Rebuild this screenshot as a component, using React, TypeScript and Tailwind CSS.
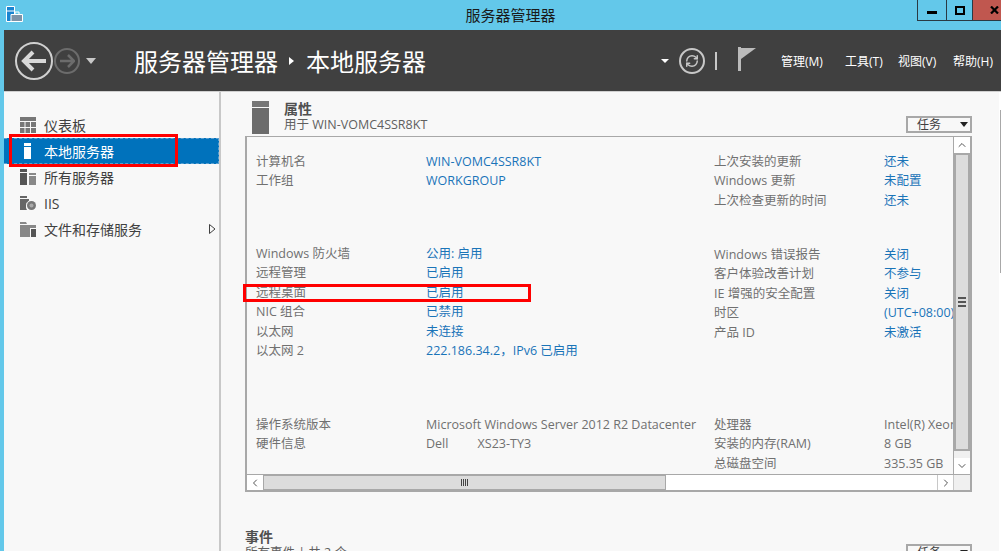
import { ChevronUp, ChevronDown, ChevronLeft, ChevronRight, RefreshCw } from "lucide-react";

function KV({ k, v, plain }: { k: string; v: string; plain?: boolean }) {
  return (
    <div className="flex h-[19.5px] items-center whitespace-pre">
      <span className="w-[170px] shrink-0 text-[#707070]">{k}</span>
      <span className={plain ? "text-[#707070]" : "text-[#1a74b8]"}>{v}</span>
    </div>
  );
}

function NavIcon({ kind, active }: { kind: string; active?: boolean }) {
  if (kind === "grid")
    return (
      <svg width="16" height="16" viewBox="0 0 16 16">
        <path d="M0 0h16v4H0zM0 5h4.500v5H0zM5.500 5h4.500v5H5.500zM11 5h5v5h-5zM0 11h4.500v5H0zM5.500 11h4.500v5H5.500zM11 11h5v5h-5z" fill="#777" />
      </svg>
    );
  if (kind === "local")
    return (
      <svg width="16" height="16" viewBox="0 0 16 16">
        <path d="M4 0h7v3H4zM4 4h7v12H4z" fill={active ? "#fff" : "#666"} />
      </svg>
    );
  if (kind === "all")
    return (
      <svg width="16" height="16" viewBox="0 0 16 16">
        <path d="M0 0h7v3H0zM0 4h7v12H0z" fill="#555" />
        <path d="M9 4h7v2H9zM9 7h7v9H9z" fill="#888" />
      </svg>
    );
  if (kind === "iis")
    return (
      <svg width="16" height="16" viewBox="0 0 16 16">
        <path d="M0 1h7v2H0zM0 4h9v1.500A6 6 0 0 0 6 10.500 6 6 0 0 0 7 15H0z" fill="#666" />
        <circle cx="11.500" cy="10.500" r="4.500" fill="#777" />
        <circle cx="11.500" cy="10.500" r="2" fill="#aaa" />
      </svg>
    );
  return (
    <svg width="16" height="16" viewBox="0 0 16 16">
      <path d="M0 1h6l1 2H0zM0 4h16v3H10v9H0z" fill="#888" />
      <path d="M11 8h5v8h-5z" fill="#555" />
    </svg>
  );
}

function TaskButton({ className }: { className: string }) {
  return (
    <div className={`flex h-[17px] w-[66px] items-center justify-between border-2 border-[#a8a8a8] pl-[9px] pr-[2px] text-[12px] text-[#404040] ${className}`}>
      <span>任务</span>
      <div className="h-0 w-0 border-x-[4px] border-t-[5px] border-x-transparent border-t-[#222]" />
    </div>
  );
}

const navItems = [
  { kind: "grid", label: "仪表板" },
  { kind: "local", label: "本地服务器", active: true },
  { kind: "all", label: "所有服务器" },
  { kind: "iis", label: "IIS" },
  { kind: "file", label: "文件和存储服务", more: true },
];

const col1a = [["计算机名", "WIN-VOMC4SSR8KT"], ["工作组", "WORKGROUP"]];
const col1b = [
  ["Windows 防火墙", "公用: 启用"],
  ["远程管理", "已启用"],
  ["远程桌面", "已启用"],
  ["NIC 组合", "已禁用"],
  ["以太网", "未连接"],
  ["以太网 2", "222.186.34.2，IPv6 已启用"],
];
const col1c = [["操作系统版本", "Microsoft Windows Server 2012 R2 Datacenter"], ["硬件信息", "Dell         XS23-TY3"]];
const col2a = [["上次安装的更新", "还未"], ["Windows 更新", "未配置"], ["上次检查更新的时间", "还未"]];
const col2b = [
  ["Windows 错误报告", "关闭"],
  ["客户体验改善计划", "不参与"],
  ["IE 增强的安全配置", "关闭"],
  ["时区", "(UTC+08:00)"],
  ["产品 ID", "未激活"],
];
const col2c = [["处理器", "Intel(R) Xeon"], ["安装的内存(RAM)", "8 GB"], ["总磁盘空间", "335.35 GB"]];

export default function App() {
  return (
    <div className="relative flex h-[551px] w-[1001px] flex-col overflow-hidden bg-[#63c8ea] font-['Open_Sans','Noto_Sans_CJK_SC',sans-serif] text-[12px]">
      {/* title bar */}
      <div className="relative flex h-[30px] shrink-0 items-start">
        <svg className="ml-[6px] mt-[6px]" width="17" height="16" viewBox="0 0 17 16">
          <path d="M0.500 0.500h8v15H0.500z" fill="#1a84d0" stroke="#fff" />
          <path d="M1 5h7" stroke="#fff" />
          <path d="M5 8.500h11.500v7H5z" fill="#7d93a8" stroke="#fff" />
          <path d="M9 8V6h4v2" fill="none" stroke="#fff" />
        </svg>
        <span className="absolute left-[20px] right-0 top-[4px] text-center text-[15px] text-[#1a1a1a]">服务器管理器</span>
        <div className="absolute right-0 top-0 flex h-[21px]">
          <div className="flex w-[29px] items-end justify-center border-b border-l border-[#2a3a44] pb-[6px]">
            <div className="h-[3px] w-[10px] bg-black" />
          </div>
          <div className="flex w-[26px] items-center justify-center border-b border-l border-[#2a3a44]">
            <div className="h-[9px] w-[10px] border-2 border-black" />
          </div>
          <div className="flex w-[29px] items-center justify-end border-b border-l border-[#2a3a44] bg-[#c0574f] pr-[2px]">
            <svg width="9" height="8" viewBox="0 0 9 8">
              <path d="M1 0.500 8 7.500M8 0.500 1 7.500" stroke="#000" strokeWidth="2.200" />
            </svg>
          </div>
        </div>
      </div>

      {/* dark header */}
      <div className="ml-[4px] flex h-[62px] shrink-0 items-center border-b border-[#d0d0d0] bg-[#404040] text-white">
        <div className="ml-[11px] flex h-[38px] w-[38px] items-center justify-center rounded-full border-2 border-[#d0d0d0]">
          <svg width="26" height="22" viewBox="0 0 26 22">
            <path d="M12 2 3 11l9 9M3 11h22" fill="none" stroke="#d8d8d8" strokeWidth="4" />
          </svg>
        </div>
        <div className="ml-[1px] flex h-[26px] w-[26px] items-center justify-center rounded-full border-2 border-[#6c6c6c]">
          <svg width="16" height="14" viewBox="0 0 16 14">
            <path d="M9 1l6 6-6 6M15 7H1" fill="none" stroke="#6c6c6c" strokeWidth="2.500" />
          </svg>
        </div>
        <div className="ml-[6px] h-0 w-0 border-x-[5px] border-t-[6px] border-x-transparent border-t-[#c8c8c8]" />
        <span className="ml-[38px] mt-[2px] text-[24px]">服务器管理器</span>
        <div className="ml-[11px] h-0 w-0 border-y-[4px] border-l-[5px] border-y-transparent border-l-white" />
        <span className="ml-[12px] mt-[2px] text-[24px]">本地服务器</span>
        <div className="ml-auto flex items-center">
          <div className="h-0 w-0 border-x-[4px] border-t-[4px] border-x-transparent border-t-white" />
          <div className="ml-[10px] flex h-[26px] w-[26px] items-center justify-center rounded-full border-2 border-[#c8c8c8]">
            <RefreshCw size={14} strokeWidth={2.500} className="text-[#c8c8c8]" />
          </div>
          <div className="ml-[10px] h-[18px] w-[2px] bg-[#c8c8c8]" />
          <svg className="mb-[4px] ml-[21px]" width="18" height="24" viewBox="0 0 18 24">
            <path d="M0 0h3v24H0z" fill="#bbb" />
            <path d="M3 1h15L3 12z" fill="#bbb" />
          </svg>
          <span className="ml-[25px] mt-[2px] w-[64px]">管理(M)</span>
          <span className="mt-[2px] w-[53px]">工具(T)</span>
          <span className="mt-[2px] w-[55px]">视图(V)</span>
          <span className="mt-[2px] w-[48px]">帮助(H)</span>
        </div>
      </div>

      {/* body */}
      <div className="ml-[4px] flex min-h-0 flex-1 bg-[#f8f8f8] text-[12.5px]">
        <aside className="flex w-[217px] shrink-0 flex-col border-r-2 border-[#c8c8c8] pt-[20px] text-[14px] text-[#404040]">
          {navItems.map((n) => (
            <div
              key={n.label}
              className={`flex h-[26px] items-center pl-[16px] ${n.active ? "border-y border-r border-dashed border-[#5a9fd0] bg-[#0072bc] text-white" : ""}`}
            >
              <NavIcon kind={n.kind} active={n.active} />
              <span className="ml-[8px]">{n.label}</span>
              {n.more && (
                <svg className="ml-auto mr-[3px]" width="7" height="10" viewBox="0 0 7 10">
                  <path d="M0.500 0.500 6 5 0.500 9.500z" fill="none" stroke="#404040" />
                </svg>
              )}
            </div>
          ))}
        </aside>

        <main className="flex min-w-0 flex-1 flex-col pl-[24px]">
          <div className="flex h-[44px] shrink-0 items-end">
            <svg className="mb-[2px] ml-[7px]" width="17" height="33" viewBox="0 0 17 33">
              <path d="M0 0h17v6H0z" fill="#777" />
              <path d="M0 7h17v26H0z" fill="#6c6c6c" />
            </svg>
            <div className="mb-[3px] ml-[15px] flex flex-col leading-[16px] text-[#606060]">
              <span className="text-[14px] font-bold text-[#505050]">属性</span>
              <span>用于 WIN-VOMC4SSR8KT</span>
            </div>
            <TaskButton className="mb-[3px] ml-auto mr-[27px]" />
          </div>

          {/* properties box */}
          <div className="mr-[27px] flex h-[356px] shrink-0 flex-col border-2 border-t border-[#a8a8a8]">
            <div className="flex min-h-0 flex-1">
              <div className="min-w-0 flex-1 overflow-hidden pl-[9px] pt-[15.5px]">
                <div className="flex">
                  <div className="w-[458px] shrink-0">
                    <div className="h-[92px]">
                      {col1a.map(([k, v]) => <KV key={k} k={k} v={v} />)}
                    </div>
                    <div className="h-[171px]">
                      {col1b.map(([k, v]) => <KV key={k} k={k} v={v} />)}
                    </div>
                    {col1c.map(([k, v]) => <KV key={k} k={k} v={v} plain />)}
                  </div>
                  <div className="shrink-0">
                    <div className="h-[93px]">
                      {col2a.map(([k, v]) => <KV key={k} k={k} v={v} />)}
                    </div>
                    <div className="h-[170px]">
                      {col2b.map(([k, v]) => <KV key={k} k={k} v={v} />)}
                    </div>
                    {col2c.map(([k, v]) => <KV key={k} k={k} v={v} plain />)}
                  </div>
                </div>
              </div>
              <div className="flex w-[17px] shrink-0 flex-col border-l border-[#a8a8a8] bg-[#f0f0f0]">
                <div className="flex h-[16px] items-center justify-center bg-white text-[#555]"><ChevronUp size={12} /></div>
                <div className="flex h-[298px] items-center justify-center border-2 border-[#a8a8a8] bg-[#dcdcdc]">
                  <div className="flex flex-col gap-[2px]">
                    <div className="h-[2px] w-[8px] bg-[#555]" />
                    <div className="h-[2px] w-[8px] bg-[#555]" />
                    <div className="h-[2px] w-[8px] bg-[#555]" />
                  </div>
                </div>
                <div className="flex-1" />
                <div className="flex h-[16px] items-center justify-center bg-white text-[#555]"><ChevronDown size={12} /></div>
              </div>
            </div>
            <div className="flex h-[16px] shrink-0 border-t border-[#a8a8a8] bg-white">
              <div className="flex w-[16px] items-center justify-center text-[#555]"><ChevronLeft size={12} /></div>
              <div className="flex w-[403px] items-center justify-center border border-[#a8a8a8] bg-[#dcdcdc]">
                <div className="flex gap-[1px]">
                  <div className="h-[7px] w-[1px] bg-[#444]" />
                  <div className="h-[7px] w-[1px] bg-[#444]" />
                  <div className="h-[7px] w-[1px] bg-[#444]" />
                  <div className="h-[7px] w-[1px] bg-[#444]" />
                </div>
              </div>
              <div className="flex-1" />
              <div className="flex w-[16px] items-center justify-center border-l border-[#c8c8c8] text-[#555]"><ChevronRight size={12} /></div>
              <div className="w-[17px] border-l border-[#c8c8c8] bg-[#f0f0f0]" />
            </div>
          </div>

          <div className="mt-[37px] flex items-start justify-between pr-[27px]">
            <div className="flex flex-col leading-[16px]">
              <span className="text-[14px] font-bold text-[#505050]">事件</span>
              <span className="text-[#606060]">所有事件 | 共 2 个</span>
            </div>
            <TaskButton className="mt-[15px]" />
          </div>
        </main>

        {/* page scrollbar, only its edge is in view */}
        <div className="w-[2px] shrink-0 bg-white pt-[18px]">
          <div className="ml-[1px] h-[163px] w-[1px] bg-[#a8a8a8]" />
        </div>
      </div>

      {/* red annotations drawn on top of the screenshot */}
      <div className="absolute left-[9px] top-[134px] h-[33px] w-[169px] border-[3px] border-[#ff0000]" />
      <div className="absolute left-[243px] top-[284px] h-[18px] w-[288px] border-[3px] border-[#ff0000]" />
    </div>
  );
}
